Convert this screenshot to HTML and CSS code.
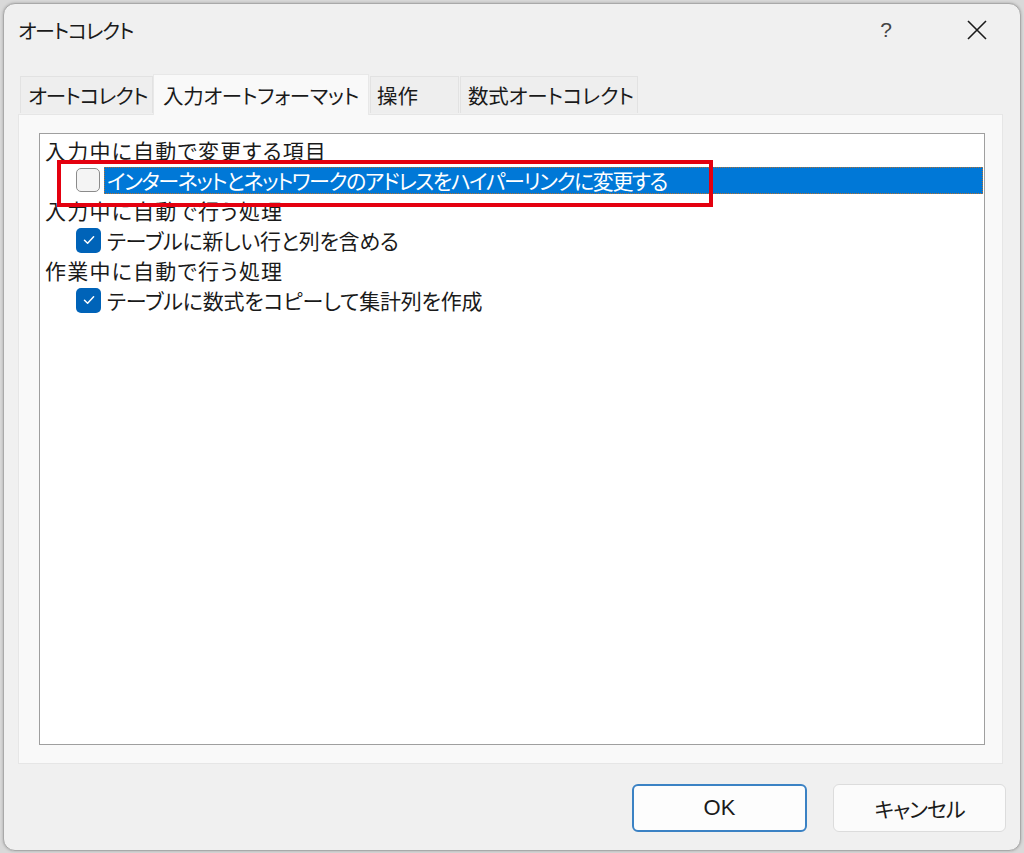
FILE: index.html
```html
<!DOCTYPE html>
<html lang="ja">
<head>
<meta charset="utf-8">
<title>オートコレクト</title>
<link rel="stylesheet" href="styles.css">
</head>
<body>
<div class="dialog">
  <div class="titlebar">
    <div class="title">オートコレクト</div>
    <div class="help">?</div>
    <div class="close">
      <svg width="22" height="22" viewBox="0 0 22 22"><path d="M2 2 L20 20 M20 2 L2 20" stroke="#1a1a1a" stroke-width="1.6" fill="none"/></svg>
    </div>
  </div>
  <div class="tabs">
    <div class="tab t1">オートコレクト</div>
    <div class="tab active t2">入力オートフォーマット</div>
    <div class="tab t3">操作</div>
    <div class="tab t4">数式オートコレクト</div>
  </div>
  <div class="panel">
    <div class="listbox">
      <div class="row heading">入力中に自動で変更する項目</div>
      <div class="row item">
        <span class="cb"></span>
        <span class="label selected">インターネットとネットワークのアドレスをハイパーリンクに変更する</span>
      </div>
      <div class="row heading">入力中に自動で行う処理</div>
      <div class="row item">
        <span class="cb checked"><svg width="14" height="14" viewBox="0 0 14 14"><path d="M2.5 7.2 L5.6 10.2 L11.6 3.8" stroke="#fff" stroke-width="1.5" fill="none" stroke-linecap="round" stroke-linejoin="round"/></svg></span>
        <span class="label l2">テーブルに新しい行と列を含める</span>
      </div>
      <div class="row heading">作業中に自動で行う処理</div>
      <div class="row item">
        <span class="cb checked"><svg width="14" height="14" viewBox="0 0 14 14"><path d="M2.5 7.2 L5.6 10.2 L11.6 3.8" stroke="#fff" stroke-width="1.5" fill="none" stroke-linecap="round" stroke-linejoin="round"/></svg></span>
        <span class="label l3">テーブルに数式をコピーして集計列を作成</span>
      </div>
      <div class="highlight-box"></div>
    </div>
  </div>
  <div class="buttons">
    <div class="btn default">OK</div>
    <div class="btn cancel">キャンセル</div>
  </div>
</div>
</body>
</html>
```
FILE: styles.css
```css
html, body {
  margin: 0;
  padding: 0;
}
body {
  width: 1024px;
  height: 853px;
  background: #d9d9d9;
  font-family: "Noto Sans CJK JP", "Noto Sans", sans-serif;
  font-feature-settings: "palt";
  color: #1a1a1a;
  overflow: hidden;
}
.dialog {
  position: relative;
  box-sizing: border-box;
  margin: 3px 0 0 3px;
  width: 1018px;
  height: 848px;
  background: #f0f0f0;
  border: 1px solid #a9a9a9;
  border-radius: 12px;
  box-shadow: 0 0 3px rgba(0,0,0,0.25);
  display: flex;
  flex-direction: column;
}
.titlebar {
  height: 52px;
  display: flex;
  align-items: center;
  padding-left: 14px;
}
.title {
  font-size: 20px;
  flex: 1;
  letter-spacing: -1.2px;
}
.help {
  font-family: "Liberation Sans", sans-serif;
  font-size: 21px;
  color: #444;
  width: 20px;
  text-align: center;
  margin-right: 70px;
}
.close {
  width: 22px;
  height: 22px;
  margin-right: 32px;
}
.close svg { display: block; }
.tabs {
  margin-top: 18px;
  margin-left: 14px;
  height: 40px;
  display: flex;
  align-items: flex-start;
}
.tab {
  box-sizing: border-box;
  margin-top: 2px;
  height: 37px;
  background: #eeeeee;
  border: 1px solid #e2e2e2;
  border-bottom: none;
  font-size: 20.5px;
  display: flex;
  align-items: center;
  padding-left: 7px;
  white-space: nowrap;
  overflow: visible;
}
.tab.t1 { width: 133px; margin-left: 2px; letter-spacing: -1px; }
.tab.t2 { width: 216px; letter-spacing: -0.3px; }
.tab.t3 { width: 89px; margin-left: 1px; padding-left: 6px; }
.tab.t4 { width: 178px; margin-left: 1px; letter-spacing: -0.2px; }
.tab.active {
  margin-top: 0;
  height: 41px;
  background: #f9f9f9;
  border-color: #e8e8e8;
  padding-left: 9px;
  position: relative;
  z-index: 1;
}
.panel {
  margin-left: 14px;
  width: 985px;
  height: 650px;
  box-sizing: border-box;
  background: #f9f9f9;
  border: 1px solid #e6e6e6;
  padding: 18px 17px 18px 20px;
}
.listbox {
  position: relative;
  box-sizing: border-box;
  height: 100%;
  background: #ffffff;
  border: 1px solid #9f9f9f;
  padding-top: 1px;
}
.row {
  height: 30px;
  display: flex;
  align-items: center;
  font-size: 21px;
  white-space: nowrap;
}
.heading {
  padding-left: 5px;
  letter-spacing: 1.2px;
}
.item {
  padding-left: 36px;
}
.cb {
  box-sizing: border-box;
  width: 24px;
  height: 24px;
  border: 1px solid #8b8b8b;
  border-radius: 5px;
  background: #f4f4f4;
  display: flex;
  align-items: center;
  justify-content: center;
  flex: none;
}
.cb.checked {
  border: none;
  background: #0063b8;
}
.cb.checked { width: 25px; height: 25px; }
.cb svg { display: block; }
.label {
  margin-left: 4px;
  padding-left: 2px;
  height: 27px;
  display: flex;
  align-items: center;
}
.label.l2 { letter-spacing: -0.3px; }
.label.l3 { letter-spacing: -0.2px; }
.label.selected {
  box-sizing: border-box;
  flex: 1;
  margin-right: 1px;
  background: #0078d7;
  color: #ffffff;
  border: 1px dotted #b5702f;
  padding-left: 2px;
  letter-spacing: -1.4px;
}
.highlight-box {
  position: absolute;
  left: 17px;
  top: 26px;
  width: 656px;
  height: 47px;
  box-sizing: border-box;
  border: 4px solid #e4000f;
  pointer-events: none;
}
.buttons {
  margin-top: 20px;
  display: flex;
  justify-content: flex-end;
  gap: 26px;
  padding-right: 14px;
}
.btn {
  box-sizing: border-box;
  width: 173px;
  height: 48px;
  border: 1px solid #dcdcdc;
  border-radius: 6px;
  background: #fbfbfb;
  display: flex;
  align-items: center;
  justify-content: center;
  font-size: 21px;
}
.btn.cancel { letter-spacing: -1px; }
.btn.default {
  width: 175px;
  border: 2px solid #3b82c4;
  background: #fdfdfd;
  font-family: "Liberation Sans", "Noto Sans CJK JP", sans-serif;
  font-size: 22px;
}
```
